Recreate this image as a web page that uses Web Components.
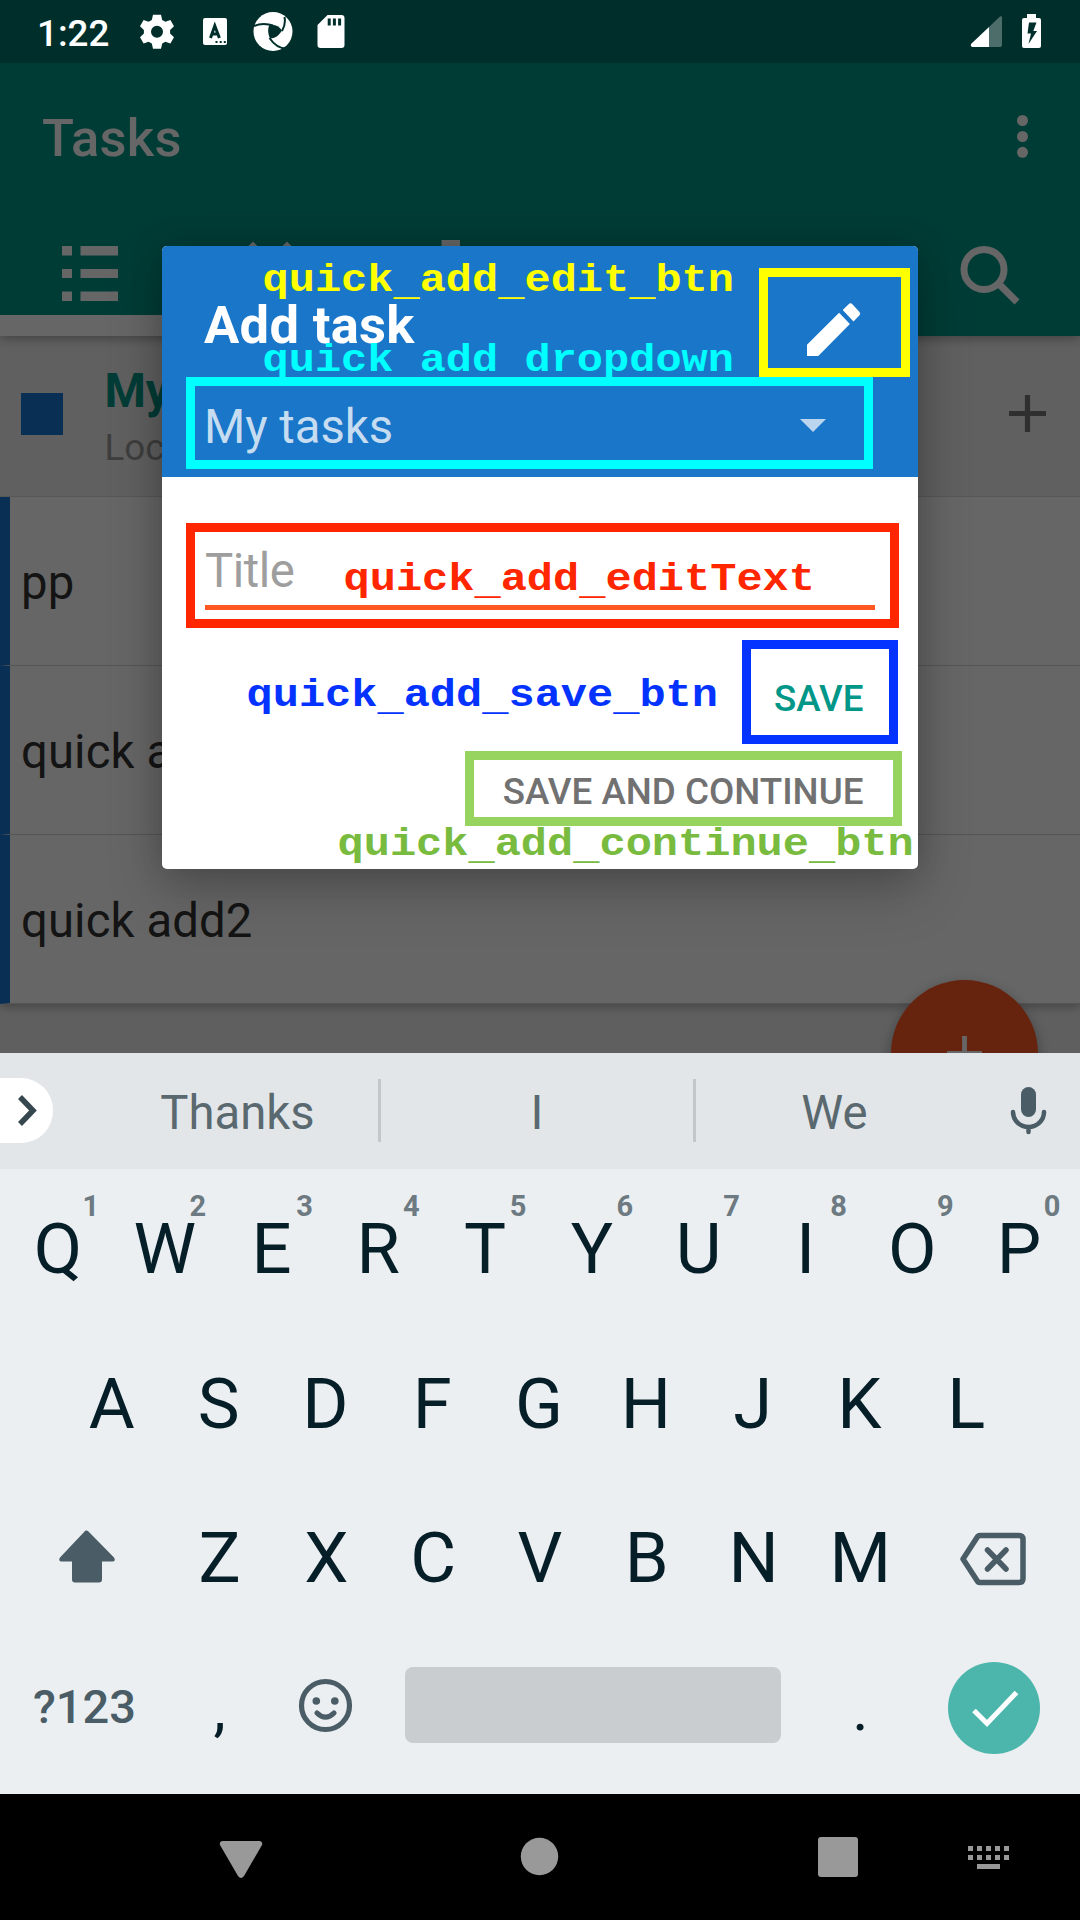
<!DOCTYPE html>
<html lang="en"><head><meta charset="utf-8"><title>Tasks</title>
<style>html,body{margin:0;padding:0;background:#000}body{width:1080px;height:1920px;overflow:hidden;font-family:Roboto,sans-serif}</style>
</head><body>
<task-screen></task-screen>
<script>
const define = (name, css, html) => customElements.define(name, class extends HTMLElement {
  constructor() {
    super();
    const root = this.attachShadow({mode: 'open'});
    const t = document.createElement('template');
    t.innerHTML = `<style>*{box-sizing:border-box}svg{display:block;flex:none}${css}</style>` + (typeof html === 'function' ? html(this) : html);
    root.append(t.content.cloneNode(true));
  }
});

define('status-bar', `
  :host{display:flex;height:63px;background:#002f2b;position:relative;color:#fff;align-items:center;padding-left:37px}
  span{font-size:36.750px;font-weight:500;line-height:63px;width:102px;padding-top:3px}
  .r{margin-left:auto;display:flex}`,
  `<span>1:22</span>
  <svg width="211" height="63" viewBox="139 0 211 63" fill="#fff">
    <g transform="translate(157 31.7)"><path fill-rule="evenodd" d="M-4-17h8l1.2 5.2 3.2 1.8 5-1.8 3.6 6.3-3.9 3.7v3.6l3.9 3.7-3.6 6.3-5-1.8-3.2 1.8L4 17h-8l-1.2-5.2-3.2-1.8-5 1.8-3.6-6.3 3.9-3.7v-3.6l-3.9-3.7 3.6-6.3 5 1.8 3.2-1.8zM0-6a6 6 0 1 0 0 12 6 6 0 0 0 0-12z"/></g>
    <rect x="203" y="18" width="24" height="27" rx="2"/>
    <path d="M210.5 38l4.3-12.2 4.6 12.2M212 34h6" fill="none" stroke="#002f2b" stroke-width="3"/>
    <path d="M215.5 41h2v2h-2zM219.7 41h2v2h-2zM223.8 41h2v2h-2z" fill="#002f2b"/>
    <circle cx="273" cy="31.5" r="19.5"/>
    <path d="M269 25.5c5-1.5 9.5 0 13 5-3 5-7 8-12 8-2-4-2.500-9-1-13z" fill="#002f2b"/>
    <path d="M254 26c6-3 14-2.500 19-.5M282 31c3-5 3.500-9 2.500-14M269.500 38c4 6 9 10.500 17 10.500" fill="none" stroke="#002f2b" stroke-width="2"/>
    <path fill-rule="evenodd" d="M327.500 15h14q3 0 3 3v27q0 3-3 3h-21q-3 0-3-3V25zM327.700 18.500v7h3v-7zm5.200 0v7h3v-7zm5.200 0v7h3v-7z"/>
  </svg>
  <svg class="r" width="115" height="63" viewBox="965 0 115 63" fill="#fff">
    <path d="M989 27l11-10.500q2-1 2 1V45q0 2-2 2h-11z" opacity=".3"/><path d="M989 27v20h-17q-2-1-1-3z"/>
    <path fill-rule="evenodd" d="M1027 14h9v4h3q2 0 2 2v26q0 2-2 2h-15q-2 0-2-2V20q0-2 2-2h3zM1029 22.500l-1.500 11h3.500l-2.500 10.500 8.500-13h-3.700l3.200-8.500z"/>
  </svg>`);

define('app-bar', `
  :host{display:block;height:273px;background:#009688;box-shadow:0 3px 10px rgba(0,0,0,.3);position:relative}
  .top{display:flex;height:147px;justify-content:space-between;align-items:center;padding:3px 0 0 42px}
  .top span{font-size:52.5px;font-weight:500;color:#fff;letter-spacing:.3px}
  .tabs{display:flex;height:126px}
  .tab{flex:1;display:flex;flex-direction:column;align-items:center}
  .tab svg{height:105px}
  .tab i{display:block;width:100%;height:21px}.on i{background:#fff}`,
  `<div class="top"><span>Tasks</span><svg width="98" height="60" viewBox="982 108 98 60" fill="#fff"><circle cx="1022.500" cy="120.500" r="5.500"/><circle cx="1022.500" cy="136.500" r="5.500"/><circle cx="1022.500" cy="152.300" r="5.500"/></svg></div>
  <div class="tabs">
    <div class="tab on"><svg width="180" viewBox="0 210 180 105" fill="#fff"><path d="M62 246h10v9.500H62zm18.500 0H118v9.500H80.500zM62 269h10v9H62zm18.500 0H118v9H80.500zM62 291.500h10v9.500H62zm18.500 0H118v9.500H80.500z"/></svg><i></i></div>
    <div class="tab"><svg width="180" viewBox="180 210 180 105" fill="#fff"><path d="M253 241.500l6 6h-12zM287 241.500l6 6h-12z"/></svg></div>
    <div class="tab"><svg width="180" viewBox="360 210 180 105" fill="#fff"><path d="M441.500 240H460v50h-18.500z"/></svg></div>
    <div class="tab"></div><div class="tab"></div>
    <div class="tab"><svg width="180" viewBox="900 210 180 105" fill="none" stroke="#fff" stroke-width="7"><circle cx="984" cy="269.500" r="20"/><path d="M1000 285l17 17"/></svg></div>
  </div>`);

define('list-header', `
  :host{display:flex;height:161px;background:#f0f0f0;border-bottom:1px solid #dadada;padding-left:21px}
  b{display:block;width:42px;height:42px;background:#1976d2;margin-top:57px}
  div{margin:27px auto 0 41.500px;font-size:47.250px;font-weight:700;line-height:56px;color:#009688}
  p{margin:1px 0 0;font-size:36.750px;font-weight:400;color:#9c9c9c}
  svg{margin:59px 34px 0 0}`,
  `<b></b><div><slot></slot><p><slot name="sub"></slot></p></div><svg width="37" height="37"><path d="M18.500 0v37M0 18.500h37" stroke="#757575" stroke-width="5.200"/></svg>`);

define('task-row', `
  :host{display:block;height:169px;background:#fff;border-left:10px solid #1976d2;border-bottom:1px solid #d4d4d4;padding:5px 0 0 11px;font-size:47.250px;line-height:163px;letter-spacing:.1px;color:#343434}`,
  `<slot></slot>`);

define('task-app', `
  :host{display:block;height:990px;overflow:hidden;background:#eee;position:relative}
  .rows{box-shadow:0 3px 9px rgba(0,0,0,.28)}
  .fab{position:absolute;left:890.500px;top:917px;width:147px;height:147px;border-radius:50%;background:#ff5722;box-shadow:0 5px 14px rgba(0,0,0,.35)}
  .scrim{position:absolute;inset:0;background:rgba(0,0,0,.6)}`,
  `<app-bar></app-bar>
  <div class="rows"><list-header>My tasks<span slot="sub">Local</span></list-header>
  <task-row>pp</task-row><task-row>quick add1</task-row><task-row>quick add2</task-row></div>
  <div class="fab"><svg width="147" height="147"><path d="M73.500 56v35M56 73.500h35" stroke="#fff" stroke-width="4.800"/></svg></div>
  <div class="scrim"></div>`);

define('add-dialog', `
  :host{display:block;position:absolute;left:162px;top:246px;width:756px;height:623px;border-radius:5px;overflow:hidden;background:#fff;box-shadow:0 22px 55px rgba(0,0,0,.22),0 0 32px rgba(0,0,0,.16)}
  header{height:231px;background:#1976c8;padding:49px 0 0 42px;color:#fff;position:relative}
  .t{display:flex;justify-content:space-between;height:60px;font-size:52.500px;font-weight:700;line-height:60px;letter-spacing:.3px}
  .t svg{margin:-2px 48px 0 0}
  .d{display:flex;justify-content:space-between;margin-top:42px;font-size:47.250px;line-height:60px;color:#c6dcf1}
  .d svg{margin:22px 92px 0 0}
  .in{margin:63px 43px 0;padding:1px 0 4px;border-bottom:5px solid #ff5722;font-size:47.250px;line-height:60px;letter-spacing:-.5px;color:#9e9e9e;height:70px}
  .b{margin:42px 54.500px 0 0;text-align:right;font-size:36.750px;font-weight:500;line-height:93px;color:#717171}
  .b div:first-child{color:#009688}`,
  `<header><div class="t">Add task<svg width="72" height="72" viewBox="0 0 24 24" fill="#fff"><path d="M3 17.250V21h3.750L17.300 10.300l-3.600-3.700zM20.500 6.300l-2.300-2.500a1 1 0 0 0-1.400 0L14.900 5.700l3.600 3.800 2-2.100q.5-.5 0-1.100z"/></svg></div>
  <div class="d">My tasks<svg width="26" height="13"><path d="M0 0h26L13 13z" fill="#bcd5ef"/></svg></div></header>
  <div class="in">Title</div>
  <div class="b"><div>SAVE</div><div>SAVE AND CONTINUE</div></div>`);

// A coloured outline or label placed freely over the screen
define('mark-box', `:host{display:block;position:absolute;border:9px solid currentColor}`, ``);
define('mark-label', `
  :host{display:block;position:absolute;font:700 43.650px/44px "Liberation Mono",monospace;white-space:pre;transform:scaleY(.88);transform-origin:0 33.600px}
  ::slotted(span){position:relative;top:4px}`,
  `<slot></slot>`);
define('mark-layer', `
  :host{display:block;position:absolute;inset:0}`,
  () => {
    const box = (c, l, t, w, h) => `<mark-box style="color:${c};left:${l}px;top:${t}px;width:${w}px;height:${h}px"></mark-box>`;
    const label = (c, l, base, s) => `<mark-label style="color:${c};left:${l}px;top:${base - 33.6}px">${s.replace(/_/g, '<span>_</span>')}</mark-label>`;
    return label('#ff0', 262.5, 291.5, 'quick_add_edit_btn') + label('#0ff', 262.5, 372, 'quick_add_dropdown')
      + label('#ff2600', 343.5, 591, 'quick_add_editText') + label('#0433ff', 246.5, 707, 'quick_add_save_btn')
      + label('#78bb3f', 337.5, 856, 'quick_add_continue_btn')
      + box('#ff0', 759, 268, 151, 109) + box('#0ff', 186, 377, 687, 92)
      + box('#ff2600', 186, 522.5, 713, 105) + box('#0433ff', 742, 639.5, 156, 104) + box('#97d35f', 465, 750.5, 437, 75);
  });

define('suggestion-strip', `
  :host{display:flex;height:116px;background:#e2e6e9;align-items:center;font-size:47.250px;color:#5a686f}
  .p{width:53px;height:65px;background:#fff;border-radius:0 32px 32px 0;margin:-2px 44px 0 0}
  span{text-align:center;padding-top:4px;line-height:112px}
  i{width:3px;height:63px;background:#c3c7ca;margin-top:-1px}`,
  `<div class="p"><svg width="53" height="65"><path d="M20 19l13 13.500L20 46" fill="none" stroke="#37474f" stroke-width="5.500"/></svg></div>
  <span style="width:281px">Thanks</span><i></i><span style="width:312px">I</span><i></i><span style="width:277px">We</span>
  <svg width="107" height="116" viewBox="973 1053 107 116"><rect x="1021" y="1087" width="15" height="30" rx="7.500" fill="#4a5c65"/><path d="M1013 1112a15.500 15 0 0 0 31 0M1028.500 1127v5" fill="none" stroke="#4a5c65" stroke-width="4.500" stroke-linecap="round"/></svg>`);

define('key-cap', `
  :host{display:block;position:relative;width:106.800px;text-align:center;font-size:70.500px;line-height:157px;color:#061e28}
  small{position:absolute;left:50%;margin-left:13px;width:40px;top:18px;font-size:29px;font-weight:700;line-height:34px;color:#6d7a81}`,
  el => `<slot></slot>${el.getAttribute('hint') ? `<small>${el.getAttribute('hint')}</small>` : ''}`);

define('key-board', `
  :host{display:block;height:625px;background:#ebeff2;padding-top:2px}
  .row{display:flex;justify-content:center;height:154.500px}
  .w{padding-right:3px}
  .last{justify-content:flex-start}
  .n{width:166px;font-size:47px;font-weight:500;line-height:144px;color:#4a5c65;padding-left:33px}
  .c{font-size:62px;color:#061e28;line-height:148px;text-align:center}
  .sp{width:376px;height:76px;border-radius:8px;background:#c9cdd0;margin-top:32.500px}`,
  () => {
    const k = (s, h) => [...s].map((c, i) => `<key-cap${h ? ` hint="${h[i]}"` : ''}>${c}</key-cap>`).join('');
    return `<div class="row w">${k('QWERTYUIOP', '1234567890')}</div><div class="row" style="padding-right:2px">${k('ASDFGHJKL')}</div>
    <div class="row"><svg width="165" height="155" viewBox="-1 1479.500 165 155"><path d="M83.500 1530q1.500-.5 3 1l25.500 26q2 3.500-1 4h-11v18q0 3-3 3H73q-3 0-3-3v-18H59q-3-1-1-4l25.500-27z" fill="#4a5c65"/></svg>${k('ZXCVBNM')}
    <svg width="165" height="155" viewBox="915 1479.500 165 155" fill="none" stroke="#4a5c65" stroke-width="5.500" stroke-linejoin="round" stroke-linecap="round"><path d="M981 1535h39q4 0 4 4v39q0 4-4 4h-39q-2 0-3-2l-14-21.500 14-21.500q1-2 3-2zM988.500 1549.500l18.500 19M1007 1549.500l-18.500 19"/></svg></div>
    <div class="row last"><div class="n">?123</div><div class="c" style="width:107px">,</div>
    <svg width="107" height="140" viewBox="273 1636 107 140" fill="none" stroke="#4a5c65" stroke-width="5.200" stroke-linecap="round"><circle cx="325.500" cy="1706.500" r="24"/><path d="M317 1714q8.500 8.500 17 0"/><g fill="#4a5c65" stroke="none"><circle cx="316.300" cy="1702" r="3.800"/><circle cx="334.800" cy="1702" r="3.800"/></g></svg>
    <div class="sp" style="margin-left:25px"></div><div class="c" style="width:159px">.</div>
    <svg width="110" height="140" viewBox="940 1636 110 140"><circle cx="994" cy="1709" r="46" fill="#4db6ac"/><path d="M974 1711.500l13 13 29.500-31" fill="none" stroke="#fff" stroke-width="5"/></svg></div>`;
  });

define('nav-bar', `:host{display:block;height:126px;background:#000}`,
  `<svg width="1080" height="126" viewBox="0 1794 1080 126" fill="#999"><path d="M222 1841h38q3 1 2 4l-18 31q-3 4-6 0l-18-31q-1-3 2-4z"/><circle cx="539.500" cy="1856.500" r="18.700"/><rect x="818" y="1837" width="40" height="40" rx="3"/>
  <path d="M968 1846h5v5h-5zm9 0h5v5h-5zm9 0h5v5h-5zm9 0h5v5h-5zm9 0h5v5h-5zM968 1855h5v5h-5zm9 0h5v5h-5zm9 0h5v5h-5zm9 0h5v5h-5zm9 0h5v5h-5zM977 1864h23v5h-23z"/></svg>`);

define('task-screen', `:host{display:block;position:relative;width:1080px;height:1920px;overflow:hidden}`,
  `<status-bar></status-bar><task-app></task-app><suggestion-strip></suggestion-strip><key-board></key-board><nav-bar></nav-bar><add-dialog></add-dialog><mark-layer></mark-layer>`);
</script>
</body></html>
